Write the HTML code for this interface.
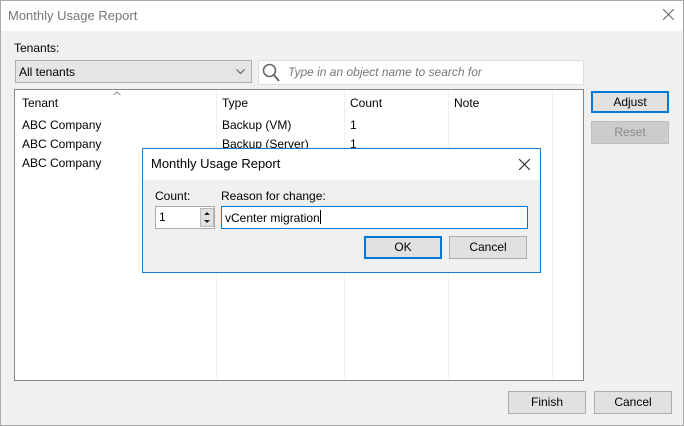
<!DOCTYPE html>
<html><head><style>
*{box-sizing:border-box;margin:0;padding:0}
body{width:684px;height:426px;background:#f0f0f0;font-family:"Liberation Sans",sans-serif;font-size:12px;color:#000;position:relative;overflow:hidden}
.a{position:absolute}
.btn{position:absolute;background:#e1e1e1;border:1px solid #adadad;text-align:center;line-height:20px;font-size:12px}
.vl{position:absolute;top:1px;bottom:1px;width:1px;background:#f0f0f0}
</style></head><body>
<div class="a" style="left:0;top:0;width:684px;height:426px;border:1px solid #aaa"></div>
<div class="a" style="left:1px;top:1px;width:682px;height:30px;background:#fff"></div>
<div class="a" style="left:8px;top:8px;font-size:13px;color:#777">Monthly Usage Report</div>
<svg class="a" style="left:663px;top:9px" width="11" height="11"><path d="M0 0L11 11M11 0L0 11" stroke="#666" stroke-width="1.1"/></svg>
<div class="a" style="left:14px;top:41px">Tenants:</div>
<div class="a" style="left:15px;top:60px;width:237px;height:23px;background:#e5e5e5;border:1px solid #adadad"></div>
<div class="a" style="left:19px;top:65px">All tenants</div>
<svg class="a" style="left:236px;top:69px" width="9" height="6"><path d="M0.5 0.5L4.5 4.5L8.5 0.5" stroke="#555" fill="none"/></svg>
<div class="a" style="left:258px;top:60px;width:326px;height:25px;background:#fff;border:1px solid #ddd"></div>
<svg class="a" style="left:262px;top:63px" width="18" height="20"><circle cx="7.5" cy="7.5" r="6" stroke="#666" stroke-width="1.6" fill="none"/><path d="M12 12L17 18" stroke="#666" stroke-width="2"/></svg>
<div class="a" style="left:288px;top:65px;color:#777;font-style:italic">Type in an object name to search for</div>
<div class="a" style="left:14px;top:89px;width:570px;height:292px;background:#fff;border:1px solid #828790">
<div class="vl" style="left:201px"></div><div class="vl" style="left:329px"></div><div class="vl" style="left:433px"></div><div class="vl" style="left:537px"></div>
</div>
<svg class="a" style="left:113px;top:91px" width="8" height="5"><path d="M0.5 4L4 0.8L7.5 4" stroke="#888" fill="none"/></svg>
<div class="a" style="left:22px;top:96px">Tenant</div>
<div class="a" style="left:222px;top:96px">Type</div>
<div class="a" style="left:350px;top:96px">Count</div>
<div class="a" style="left:454px;top:96px">Note</div>
<div class="a" style="left:22px;top:118px">ABC Company</div>
<div class="a" style="left:222px;top:118px">Backup (VM)</div>
<div class="a" style="left:350px;top:118px">1</div>
<div class="a" style="left:22px;top:137px">ABC Company</div>
<div class="a" style="left:222px;top:137px">Backup (Server)</div>
<div class="a" style="left:350px;top:137px">1</div>
<div class="a" style="left:22px;top:156px">ABC Company</div>
<div class="btn" style="left:591px;top:91px;width:78px;height:22px;border:2px solid #0078d7;line-height:18px">Adjust</div>
<div class="btn" style="left:591px;top:121px;width:78px;height:23px;background:#ccc;border-color:#bfbfbf;color:#888">Reset</div>
<div class="btn" style="left:508px;top:391px;width:78px;height:23px">Finish</div>
<div class="btn" style="left:594px;top:391px;width:78px;height:23px">Cancel</div>
<!-- dialog -->
<div class="a" style="left:142px;top:148px;width:399px;height:125px;background:#f0f0f0;border:1px solid #1979ca">
<div class="a" style="left:0;top:0;width:397px;height:31px;background:#fff"></div>
<div class="a" style="left:8px;top:7px;font-size:13px">Monthly Usage Report</div>
<svg class="a" style="left:376px;top:10px" width="11" height="11"><path d="M0 0L11 11M11 0L0 11" stroke="#222" stroke-width="1.1"/></svg>
<div class="a" style="left:12px;top:40px">Count:</div>
<div class="a" style="left:78px;top:40px">Reason for change:</div>
<div class="a" style="left:12px;top:57px;width:60px;height:23px;background:#fff;border:1px solid #aaa"></div>
<div class="a" style="left:16px;top:61px">1</div>
<div class="a" style="left:57px;top:59px;width:14px;height:19px;background:#e1e1e1;border:1px solid #bbb"></div>
<svg class="a" style="left:59px;top:61px" width="10" height="16"><path d="M2 5L5 2L8 5Z M2 10L5 13L8 10Z" fill="#222"/></svg>
<div class="a" style="left:78px;top:57px;width:307px;height:23px;background:#fff;border:1px solid #0078d7"></div>
<div class="a" style="left:82px;top:61px">vCenter migration<span style="display:inline-block;width:1px;height:14px;background:#000;vertical-align:-2px"></span></div>
<div class="btn" style="left:221px;top:87px;width:78px;height:23px;border:2px solid #0078d7;line-height:19px">OK</div>
<div class="btn" style="left:306px;top:87px;width:78px;height:23px">Cancel</div>
</div>
</body></html>
